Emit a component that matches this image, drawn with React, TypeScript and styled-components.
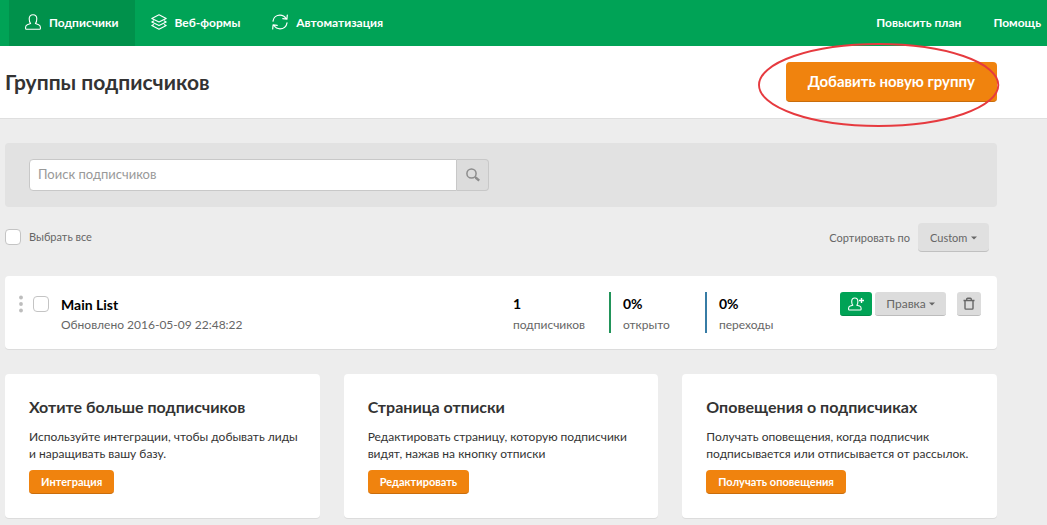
import React from 'react';
import styled, { createGlobalStyle } from 'styled-components';

const GlobalStyle = createGlobalStyle`
  * { box-sizing: border-box; }
  body {
    margin: 0;
    background: #ededed;
    color: #333;
    font: 12px/17px Lato, 'Liberation Sans', sans-serif;
  }
  h1, h2, h3, p, dl, dd { margin: 0; }
  button, input, select { font: inherit; }
`;

const TopBar = styled.header`
  display: flex;
  justify-content: space-between;
  height: 46px;
  padding: 0 0 0 9px;
  background: #00a356;
`;

const NavGroup = styled.nav`
  display: flex;
`;

const NavLink = styled.a<{ $active?: boolean; $last?: boolean }>`
  display: flex;
  align-items: center;
  gap: 8px;
  padding: 0 ${(p) => (p.$last ? '6px' : '16px')} 2px 16px;
  background: ${(p) => (p.$active ? '#00914b' : 'transparent')};
  color: #fff;
  font-weight: 700;
  text-decoration: none;
  white-space: nowrap;
`;

const TitleBar = styled.section`
  display: flex;
  align-items: center;
  justify-content: space-between;
  padding: 16px 50px 16px 5px;
  background: #fff;
  border-bottom: 1px solid #dfdfdf;
`;

const Title = styled.h1`
  color: #333;
  font-size: 21px;
  line-height: 26px;
`;

const Button = styled.button<{ $large?: boolean }>`
  height: ${(p) => (p.$large ? '40px' : '24px')};
  padding: ${(p) => (p.$large ? '0 22px' : '0 12px')};
  border: 0;
  border-bottom: 1px solid #c96d0c;
  border-radius: 4px;
  background: #f0830e;
  color: #fff;
  font-size: ${(p) => (p.$large ? '15px' : '11px')};
  font-weight: 700;
  white-space: nowrap;
  cursor: pointer;
`;

const Highlighted = styled.div`
  position: relative;
`;

const Ellipse = styled.svg`
  position: absolute;
  top: -18px;
  left: -28px;
  width: calc(100% + 30px);
  height: 83px;
  overflow: visible;
  pointer-events: none;
`;

const Main = styled.main`
  padding: 24px 50px 7px 5px;
`;

const SearchPanel = styled.form`
  display: flex;
  padding: 16px 24px;
  border-radius: 4px;
  background: #e2e2e2;
`;

const SearchInput = styled.input`
  flex: 0 1 428px;
  min-width: 0;
  height: 32px;
  padding: 0 8px 2px;
  border: 1px solid #c8c8c8;
  border-radius: 4px 0 0 4px;
  background: #fff;
  color: #333;
  font-size: 13px;

  &::placeholder { color: #999; opacity: 1; }
`;

const SearchButton = styled.button`
  display: flex;
  align-items: center;
  justify-content: center;
  width: 32px;
  height: 32px;
  padding: 0;
  border: 1px solid #c8c8c8;
  border-left: 0;
  border-radius: 0 4px 4px 0;
  background: #dcdcdc;
  color: #8c8c8c;
`;

const ListControls = styled.div`
  display: flex;
  align-items: flex-start;
  justify-content: space-between;
  padding: 16px 8px 24px 0;
  color: #666;
  font-size: 11px;
`;

const CheckLabel = styled.label`
  display: flex;
  align-items: center;
  gap: 8px;
  padding-top: 5px;
`;

const Checkbox = styled.input.attrs({ type: 'checkbox' })`
  appearance: none;
  width: 16px;
  height: 16px;
  margin: 0;
  border: 1px solid #c4c4c4;
  border-radius: 4px;
  background: #fff;

  &:checked { background: #00a356; }
`;

const SortLabel = styled.label`
  display: flex;
  align-items: center;
  gap: 8px;
`;

const SelectBox = styled.span`
  position: relative;
  display: flex;
  color: #666;
`;

const SortSelect = styled.select`
  appearance: none;
  width: 71px;
  height: 29px;
  padding: 0 12px;
  border: 0;
  border-bottom: 1px solid #c0c0c0;
  border-radius: 4px;
  background: #e0e0e0;
  color: #666;
`;

const SelectCaret = styled.span`
  position: absolute;
  top: 0;
  right: 12px;
  bottom: 0;
  display: flex;
  align-items: center;
  pointer-events: none;
`;

const Card = styled.section`
  border-radius: 4px;
  background: #fff;
  box-shadow: 0 1px 0 #dcdcdc;
`;

const GroupCard = styled(Card)`
  display: flex;
  align-items: flex-start;
  margin-bottom: 25px;
  padding: 16px 16px 16px 14px;
`;

const Handle = styled.span`
  display: flex;
  padding: 3px 10px 0 0;
`;

const GroupCheck = styled.span`
  display: flex;
  padding: 4px 12px 0 0;
`;

const GroupInfo = styled.div`
  flex: 1;
  min-width: 0;
  padding-top: 4px;
  color: #666;
`;

const GroupName = styled.h2`
  margin-bottom: 3px;
  color: #000;
  font-size: 14px;
  line-height: 17px;
`;

const Stats = styled.dl`
  display: grid;
  grid-template-columns: 110px 96px 96px;
  margin-right: 39px;
`;

const Stat = styled.div<{ $color: string }>`
  display: flex;
  flex-direction: column;
  gap: 4px;
  height: 41px;
  padding: 3px 0 0 12px;
  border-left: 2px solid ${(p) => p.$color};
`;

const StatValue = styled.dd`
  color: #000;
  font-size: 14px;
  font-weight: 700;
`;

const StatName = styled.dt`
  order: 1;
  color: #666;
`;

const Actions = styled.div`
  display: flex;
  gap: 3px;
`;

const ActionButton = styled.button<{ $kind: 'add' | 'menu' | 'icon' }>`
  display: flex;
  align-items: center;
  justify-content: center;
  gap: 3px;
  width: ${(p) => ({ add: '32px', menu: '71px', icon: '24px' })[p.$kind]};
  height: 24px;
  margin-left: ${(p) => (p.$kind === 'icon' ? '8px' : '0')};
  padding: 0;
  border: 0;
  border-bottom: 1px solid ${(p) => (p.$kind === 'add' ? '#008c49' : '#bcbcbc')};
  border-radius: 3px;
  background: ${(p) => (p.$kind === 'add' ? '#00a356' : '#dcdcdc')};
  color: ${(p) => (p.$kind === 'add' ? '#fff' : '#666')};
`;

const Promos = styled.div`
  display: grid;
  grid-template-columns: repeat(3, minmax(0, 1fr));
  gap: 24px;
`;

const Promo = styled(Card)`
  display: flex;
  flex-direction: column;
  align-items: flex-start;
  padding: 24px;
`;

const PromoTitle = styled.h3`
  margin-bottom: 12px;
  font-size: 16px;
  line-height: 18px;
`;

const PromoText = styled.p`
  margin: 0 -8px 8px 0;
`;

const UserIcon = () => (
  <svg width="16" height="16" viewBox="0 0 16 16" fill="none" stroke="currentColor" strokeWidth="1.1" strokeLinejoin="round" aria-hidden="true">
    <path d="M5.6 9.6C4.6 8.6 4.2 6.8 4.2 4.8 4.2 2.3 5.6.7 8 .7s3.800 1.600 3.800 4.100c0 2-.4 3.800-1.400 4.800l3.300 1.100c1.300.5 1.700 1.400 1.700 2.600v1.300c0 .5-.2.7-.7.7H1.300c-.5 0-.7-.2-.7-.7v-1.300c0-1.200.4-2.100 1.700-2.600z" />
  </svg>
);

const LayersIcon = () => (
  <svg width="16" height="16" viewBox="0 0 16 16" fill="none" stroke="currentColor" strokeWidth="1.1" strokeLinejoin="round" aria-hidden="true">
    <path d="M8 .8 15.2 4.4 8 8 .8 4.400z" />
    <path d="M3 6.800.8 8 8 11.600 15.2 8 13 6.800" />
    <path d="M3 10.400.8 11.600 8 15.200l7.200-3.600-2.200-1.200" />
  </svg>
);

const RefreshIcon = () => (
  <svg width="16" height="16" viewBox="0 0 16 16" fill="none" stroke="currentColor" strokeWidth="1.2" strokeLinejoin="round" strokeLinecap="round" aria-hidden="true">
    <path d="M1 7.200C1.500 3.500 4.500 1.200 8 1.200c2.600 0 4.700 1.200 6 3.300M15.300 1l-.4 4.200-4.100-.6" />
    <path d="M15 8.800c-.5 3.700-3.500 6-7 6-2.600 0-4.700-1.200-6-3.300M.7 15l.4-4.200 4.100.6" />
  </svg>
);

const SearchIcon = () => (
  <svg width="14" height="14" viewBox="0 0 14 14" fill="none" stroke="currentColor" aria-hidden="true">
    <circle cx="5.5" cy="5.5" r="4.6" strokeWidth="1.5" />
    <path d="m8.800 8.800 1.400 1.200" strokeWidth="1.5" />
    <path d="m9.600 9.500 3.600 3.200" strokeWidth="2.4" />
  </svg>
);

const DotsIcon = () => (
  <svg width="4" height="18" viewBox="0 0 4 18" fill="#bdbdbd" aria-hidden="true">
    <circle cx="2" cy="2.5" r="1.9" />
    <circle cx="2" cy="9" r="1.9" />
    <circle cx="2" cy="15.5" r="1.9" />
  </svg>
);

const AddUserIcon = () => (
  <svg width="17" height="14" viewBox="0 0 17 14" fill="none" stroke="currentColor" strokeWidth="1.1" strokeLinejoin="round" aria-hidden="true">
    <path d="M4.800 8.200C4 7.400 3.700 6 3.700 4.500 3.700 2.300 4.900 1 6.800 1s3.100 1.300 3.100 3.500c0 1.500-.3 2.900-1.100 3.700l2.700.9c1.200.4 1.600 1.200 1.600 2.200v1c0 .5-.2.700-.7.700H1.300c-.5 0-.7-.2-.7-.7v-1c0-1 .4-1.800 1.600-2.200z" />
    <path d="M13.500 1v5M11 3.500h5" strokeWidth="1.4" />
  </svg>
);

const TrashIcon = () => (
  <svg width="12" height="14" viewBox="0 0 12 14" fill="none" stroke="currentColor" strokeWidth="1.4" strokeLinejoin="round" aria-hidden="true">
    <path d="M.5 3.500h11M3.700 3.500V2.200c0-.6.4-1 1-1h2.600c.6 0 1 .4 1 1v1.300M2 3.500v7.700c0 .6.300.9.9.9h6.200c.6 0 .9-.3.900-.9V3.500" />
  </svg>
);

const CaretIcon = () => (
  <svg width="6" height="4" viewBox="0 0 6 4" fill="currentColor" aria-hidden="true">
    <path d="M0 .5h6l-3 3z" />
  </svg>
);

const stats = [
  { value: '1', name: 'подписчиков', color: 'transparent' },
  { value: '0%', name: 'открыто', color: '#22945a' },
  { value: '0%', name: 'переходы', color: '#377ca5' },
];

const promos = [
  {
    title: 'Хотите больше подписчиков',
    lines: ['Используйте интеграции, чтобы добывать лиды', 'и наращивать вашу базу.'],
    action: 'Интеграция',
  },
  {
    title: 'Страница отписки',
    lines: ['Редактировать страницу, которую подписчики', 'видят, нажав на кнопку отписки'],
    action: 'Редактировать',
  },
  {
    title: 'Оповещения о подписчиках',
    lines: ['Получать оповещения, когда подписчик', 'подписывается или отписывается от рассылок.'],
    action: 'Получать оповещения',
  },
];

export default function App() {
  return (
    <>
      <GlobalStyle />
      <TopBar>
        <NavGroup>
          <NavLink href="#subscribers" $active><UserIcon />Подписчики</NavLink>
          <NavLink href="#forms"><LayersIcon />Веб-формы</NavLink>
          <NavLink href="#automation"><RefreshIcon />Автоматизация</NavLink>
        </NavGroup>
        <NavGroup>
          <NavLink href="#upgrade">Повысить план</NavLink>
          <NavLink href="#help" $last>Помощь</NavLink>
        </NavGroup>
      </TopBar>
      <TitleBar>
        <Title>Группы подписчиков</Title>
        <Highlighted>
          <Button type="button" $large>Добавить новую группу</Button>
          <Ellipse viewBox="0 0 242 83" preserveAspectRatio="none" aria-hidden="true">
            <ellipse cx="121" cy="41" rx="120" ry="41" fill="none" stroke="#e63a3f" strokeWidth="1.9" />
          </Ellipse>
        </Highlighted>
      </TitleBar>
      <Main>
        <SearchPanel role="search">
          <SearchInput type="text" placeholder="Поиск подписчиков" aria-label="Поиск подписчиков" />
          <SearchButton type="button" aria-label="Найти"><SearchIcon /></SearchButton>
        </SearchPanel>
        <ListControls>
          <CheckLabel><Checkbox />Выбрать все</CheckLabel>
          <SortLabel>
            Сортировать по
            <SelectBox>
              <SortSelect><option>Custom</option></SortSelect>
              <SelectCaret><CaretIcon /></SelectCaret>
            </SelectBox>
          </SortLabel>
        </ListControls>
        <GroupCard>
          <Handle><DotsIcon /></Handle>
          <GroupCheck><Checkbox aria-label="Main List" /></GroupCheck>
          <GroupInfo>
            <GroupName>Main List</GroupName>
            <p>Обновлено 2016-05-09 22:48:22</p>
          </GroupInfo>
          <Stats>
            {stats.map((s) => (
              <Stat key={s.name} $color={s.color}>
                <StatName>{s.name}</StatName>
                <StatValue>{s.value}</StatValue>
              </Stat>
            ))}
          </Stats>
          <Actions>
            <ActionButton type="button" $kind="add" aria-label="Добавить подписчика"><AddUserIcon /></ActionButton>
            <ActionButton type="button" $kind="menu">Правка<CaretIcon /></ActionButton>
            <ActionButton type="button" $kind="icon" aria-label="Удалить"><TrashIcon /></ActionButton>
          </Actions>
        </GroupCard>
        <Promos>
          {promos.map((p) => (
            <Promo key={p.title}>
              <PromoTitle>{p.title}</PromoTitle>
              <PromoText>{p.lines[0]}<br />{p.lines[1]}</PromoText>
              <Button type="button">{p.action}</Button>
            </Promo>
          ))}
        </Promos>
      </Main>
    </>
  );
}
